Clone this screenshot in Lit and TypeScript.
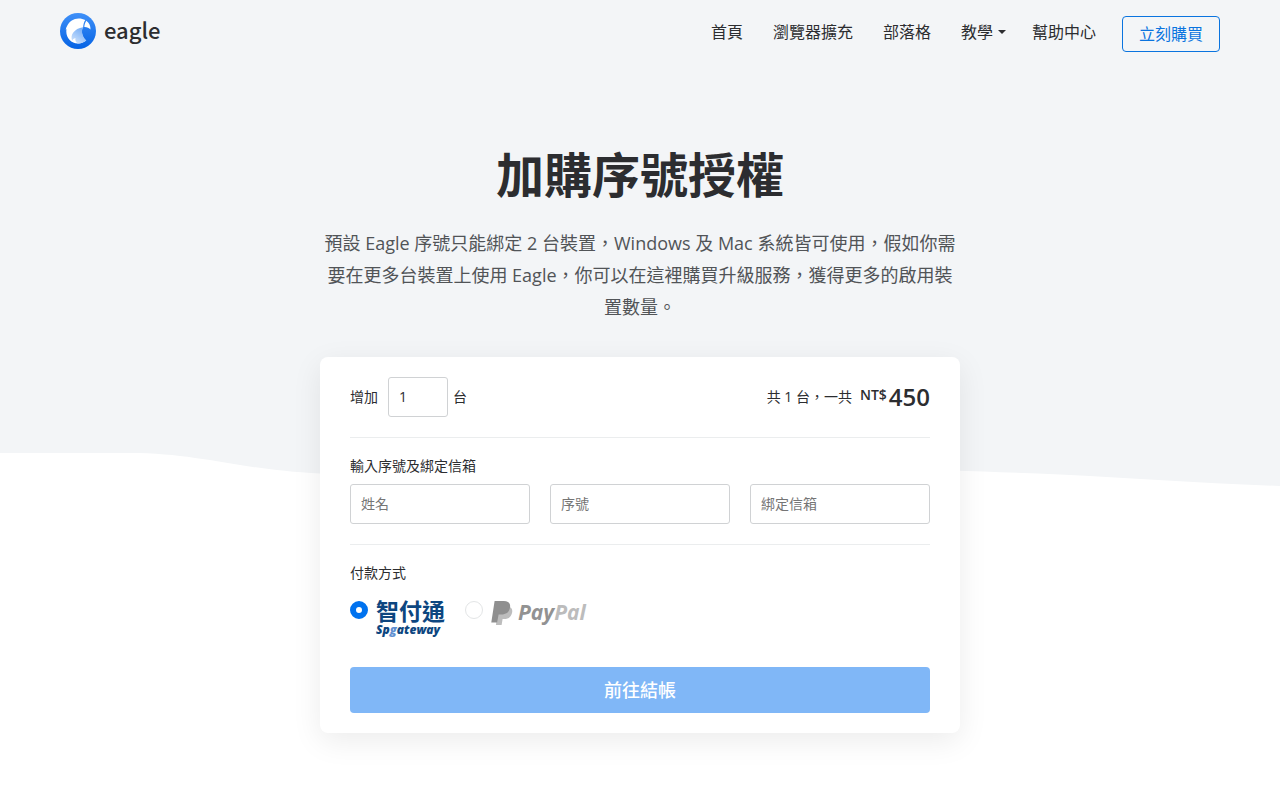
import { LitElement, html, css, svg } from "lit";
import { customElement, state } from "lit/decorators.js";

const eagleMark = html`<svg class="mark" viewBox="0 0 36 36" aria-hidden="true">
  <defs>
    <linearGradient id="disc" x1="0" y1="0" x2="0" y2="1">
      <stop offset="0" stop-color="#3f90f8" />
      <stop offset="1" stop-color="#0563e4" />
    </linearGradient>
    <linearGradient id="wing" x1="0.8" y1="0" x2="0.2" y2="1">
      <stop offset="0" stop-color="#6ea9f6" />
      <stop offset="1" stop-color="#cfe3fd" />
    </linearGradient>
  </defs>
  <circle cx="18" cy="18" r="18" fill="url(#disc)" />
  <path fill="#fff" d="M7.200 12.800C9.300 8.200 13.600 5.400 18.600 5.400c2.600 0 4.900.5 6.700 1.600-1.300 2-2 4.400-2.100 7.300-1.400 1.600-1.700 4-1 7 .6 2.600 1.900 4.700 3.900 6.200-2.500 2-5.400 3-8.400 3C11.500 30.500 6.300 25.200 6.300 18.600c0-.9.1-1.700.2-2.500l-.8.9c.2-1.600.7-3 1.500-4.200z" />
  <path fill="#fff" d="M26.300 7.700c2.900 2 4.400 5.100 4.200 8.800-1.500-1.800-3.500-2.700-6.200-2.600.1-2.300.8-4.400 2-6.200z" />
  <path fill="url(#wing)" d="M12.200 27.700c-1.300-3-.6-5.700 1.100-8.100 2-2.800 5.300-4.700 9.900-5.300-1.300 2.200-1.500 4.700-.7 7.200.7 2.500 2 4.500 3.900 5.900-2.500 2-5.500 3.100-8.700 3.100-1.900-1.200-2.700-3.200-2.300-5.600-1.600.5-2.700 1.400-3.200 2.800z" />
</svg>`;

const spgatewayLogo = html`<svg class="spgateway" viewBox="0 0 69 37" role="img" aria-label="智付通 Spgateway">
  <text x="0" y="19" class="sp-zh">智付通</text>
  <text x="0" y="33" class="sp-en">Sp<tspan fill="#5f8fd0">g</tspan>ateway</text>
</svg>`;

const paypalLogo = html`<svg class="paypal" viewBox="0 1 98 26" role="img" aria-label="PayPal">
  <path fill="#bdbdbd" d="M8 6.500h9.500c3.400.9 4.300 3.300 3.500 6.600-1 4.400-4 5.900-7.900 5.900h-1.500l-1 6H4.900z" />
  <path fill="#8f8f8f" d="M3.600 1h9.200c4.600 0 7 2.300 6.200 6.600-.9 5-4.200 7-8.700 7H7.600L6.100 22.500H.300z" />
  <text x="27" y="20" class="pp" fill="#929292">Pay<tspan fill="#bcbcbc">Pal</tspan></text>
</svg>`;

const backdrop = svg`<path d="M0 0H1280V486C1200 483 1130 478 1060 474.500C900 468 780 464 640 468C520 472 420 476 320 473.500C240 470 200 453 130 453H0Z" />`;

@customElement("app-root")
export class AppRoot extends LitElement {
  static styles = css`
    :host {
      display: block;
      color: #2c2d30;
      font-family: "Open Sans", "Noto Sans CJK TC", sans-serif;
      font-size: 14px;
      line-height: 20px;
    }
    * {
      box-sizing: border-box;
    }
    .page {
      display: grid;
      grid-template-columns: minmax(0, 1fr);
      align-items: start;
      background: #fff;
      min-height: 100vh;
    }
    .backdrop,
    .content {
      grid-area: 1 / 1;
    }
    .backdrop {
      display: block;
      width: 100%;
      height: 486px;
      fill: #f3f5f7;
    }
    .content {
      padding: 0 20px 56px;
    }
    .bar {
      display: flex;
      justify-content: space-between;
      align-items: flex-start;
      flex-wrap: wrap;
      max-width: 1160px;
      margin: 0 auto;
      padding: 13px 0 12px;
    }
    a {
      color: inherit;
      text-decoration: none;
    }
    .brand {
      display: flex;
      gap: 8px;
      font: 500 22px/32px "Noto Sans CJK TC", sans-serif;
    }
    .mark {
      width: 36px;
      height: 36px;
    }
    nav {
      display: flex;
      align-items: flex-start;
      flex-wrap: wrap;
      gap: 26px;
      padding-top: 3px;
      font-size: 16px;
      line-height: 32px;
    }
    .link {
      padding-right: 4px;
    }
    .toggle {
      display: flex;
      align-items: center;
      gap: 5px;
      padding: 0;
      border: 0;
      background: none;
      color: inherit;
      font: inherit;
    }
    .toggle::after {
      content: "";
      border: 4px solid transparent;
      border-top-color: currentColor;
      border-bottom: 0;
    }
    .buy {
      padding: 0 16px;
      border: 1px solid #0a74df;
      border-radius: 4px;
      color: #0a74df;
      line-height: 34px;
    }
    main {
      max-width: 640px;
      margin: 0 auto;
    }
    h1 {
      margin: 75px 0 16px;
      text-align: center;
      font-size: 48px;
      line-height: 72px;
      font-weight: 700;
    }
    .lead {
      margin: 0 0 34px;
      text-align: center;
      color: #515457;
      font-size: 18px;
      line-height: 32px;
    }
    .card {
      padding: 20px 30px;
      border-radius: 8px;
      background: #fff;
      box-shadow: 0 8px 30px rgba(0, 0, 0, 0.08);
    }
    .row {
      display: flex;
      justify-content: space-between;
      align-items: center;
    }
    .quantity {
      display: flex;
      align-items: center;
    }
    .quantity input {
      width: 60px;
      margin: 0 5px 0 10px;
    }
    .field {
      width: 100%;
      height: 40px;
      padding: 0 10px 2px;
      border: 1px solid #d0d2d4;
      border-radius: 3px;
      background: #fff;
      color: inherit;
      font: inherit;
    }
    .field::placeholder {
      color: #757575;
      opacity: 1;
    }
    .total {
      display: flex;
      align-items: center;
    }
    .currency {
      margin: 0 2px 4px 8px;
      font-weight: 600;
    }
    .amount {
      font-size: 24px;
      font-weight: 600;
    }
    .group {
      margin-top: 20px;
      padding-top: 18px;
      border-top: 1px solid #ebedee;
    }
    h2 {
      margin: 0 0 8px;
      font-size: 14px;
      line-height: 20px;
      font-weight: 400;
    }
    .fields {
      display: grid;
      grid-template-columns: repeat(3, minmax(0, 1fr));
      gap: 20px;
    }
    .methods {
      display: flex;
      gap: 20px;
      padding: 10px 0 29px;
    }
    .method {
      display: flex;
      align-items: flex-start;
      gap: 8px;
    }
    .radio {
      appearance: none;
      width: 18px;
      height: 18px;
      margin: 0;
      border: 1px solid #e3e5e6;
      border-radius: 50%;
      background: #fff;
    }
    .radio:checked {
      border: 6px solid #0072ef;
    }
    .spgateway,
    .paypal {
      overflow: visible;
    }
    .spgateway {
      width: 69px;
      height: 37px;
    }
    .paypal {
      width: 98px;
      height: 26px;
    }
    .sp-zh {
      font: 700 23px "Noto Sans CJK TC", sans-serif;
      fill: #0d4680;
    }
    .sp-en {
      font: italic 800 12px "Open Sans", sans-serif;
      fill: #0d4680;
    }
    .pp {
      font: italic 700 21px "Open Sans", sans-serif;
    }
    .submit {
      display: block;
      width: 100%;
      height: 46px;
      border: 0;
      border-radius: 4px;
      background: #80b7f7;
      color: #fff;
      font: inherit;
      font-size: 18px;
      font-weight: 500;
    }
  `;

  @state() private seats = 1;
  @state() private method = "spgateway";

  private setSeats(e: Event) {
    this.seats = Math.max(1, Number((e.target as HTMLInputElement).value) || 1);
  }

  private option(id: string, logo: unknown) {
    return html`<label class="method">
      <input class="radio" type="radio" name="method" .checked=${this.method === id} @change=${() => (this.method = id)} />
      ${logo}
    </label>`;
  }

  render() {
    return html`<div class="page">
      <svg class="backdrop" viewBox="0 0 1280 486" preserveAspectRatio="none" aria-hidden="true">${backdrop}</svg>
      <div class="content">
        <header class="bar">
          <a class="brand" href="#">${eagleMark}<span>eagle</span></a>
          <nav>
            <a class="link" href="#">首頁</a>
            <a class="link" href="#">瀏覽器擴充</a>
            <a class="link" href="#">部落格</a>
            <button class="toggle" type="button" aria-haspopup="true">教學</button>
            <a href="#">幫助中心</a>
            <a class="buy" href="#">立刻購買</a>
          </nav>
        </header>
        <main>
          <h1>加購序號授權</h1>
          <p class="lead">預設 Eagle 序號只能綁定 2 台裝置，Windows 及 Mac 系統皆可使用，假如你需要在更多台裝置上使用 Eagle，你可以在這裡購買升級服務，獲得更多的啟用裝置數量。</p>
          <form class="card" @submit=${(e: Event) => e.preventDefault()}>
            <div class="row">
              <div class="quantity">
                <label for="seats">增加</label>
                <input class="field" id="seats" type="text" inputmode="numeric" .value=${String(this.seats)} @change=${this.setSeats} />
                <span>台</span>
              </div>
              <div class="total">
                <span>共 ${this.seats} 台，一共</span>
                <span class="currency">NT$</span>
                <span class="amount">${this.seats * 450}</span>
              </div>
            </div>
            <section class="group">
              <h2>輸入序號及綁定信箱</h2>
              <div class="fields">
                <input class="field" type="text" placeholder="姓名" aria-label="姓名" />
                <input class="field" type="text" placeholder="序號" aria-label="序號" />
                <input class="field" type="email" placeholder="綁定信箱" aria-label="綁定信箱" />
              </div>
            </section>
            <section class="group">
              <h2 id="pay">付款方式</h2>
              <div class="methods" role="radiogroup" aria-labelledby="pay">
                ${this.option("spgateway", spgatewayLogo)} ${this.option("paypal", paypalLogo)}
              </div>
              <button class="submit" type="submit">前往結帳</button>
            </section>
          </form>
        </main>
      </div>
    </div>`;
  }
}
